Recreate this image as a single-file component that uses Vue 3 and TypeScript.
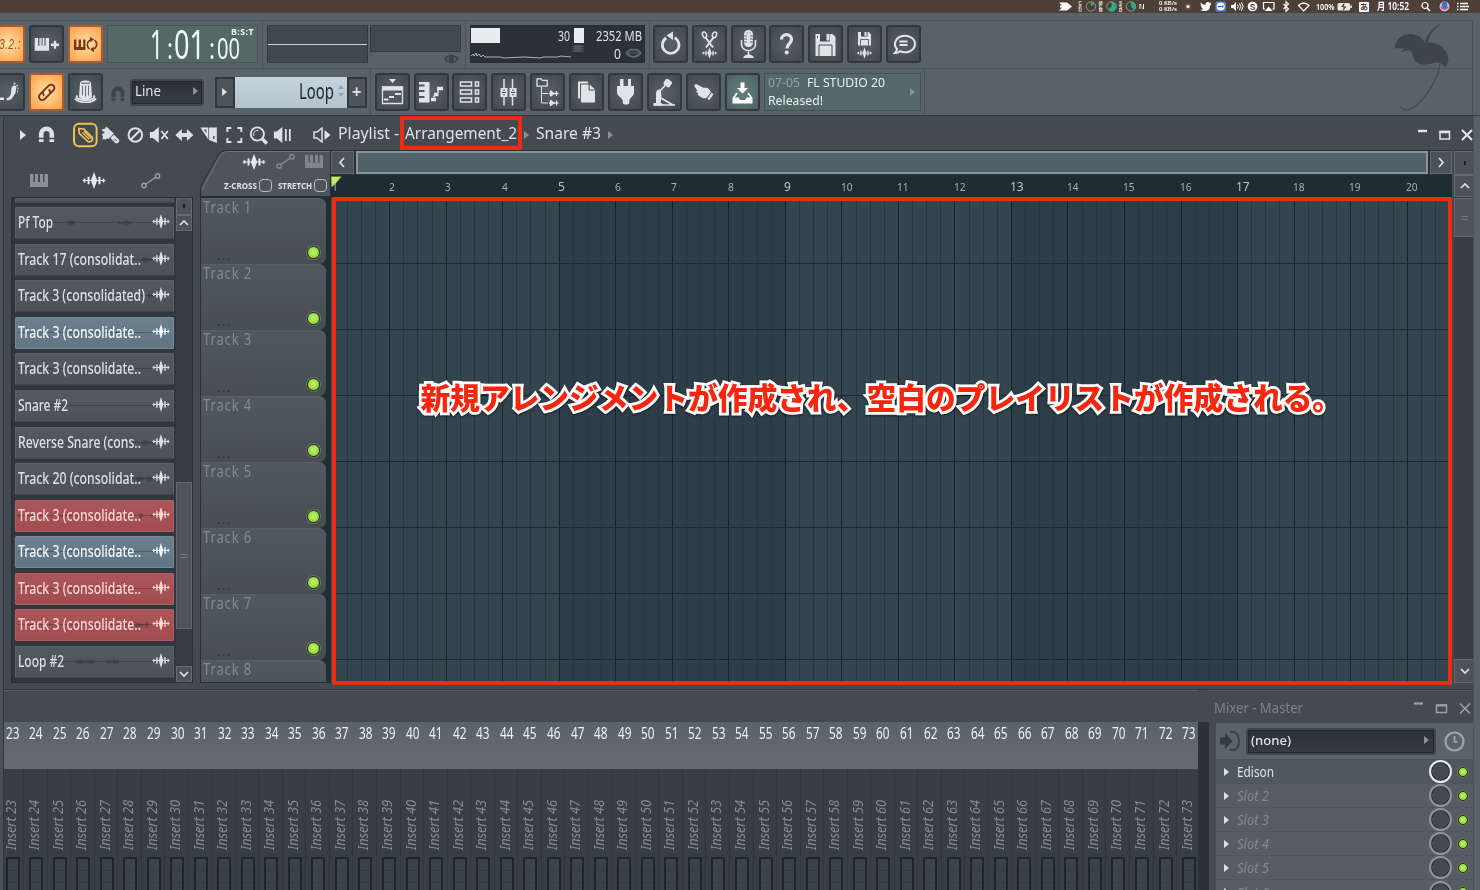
<script setup lang="ts">
import { type Directive } from 'vue'

/* Condenses a text so that it takes the given width. */
const vFit: Directive<HTMLElement, number> = {
  mounted(el, { value }) {
    const style = getComputedStyle(el)
    const natural = parseFloat(style.width)
    el.style.marginRight = `${(parseFloat(style.marginRight) || 0) + value - natural}px`
    el.style.transform = `scaleX(${value / natural})`
  },
}

interface Clip { name: string; w: number; tone?: 'red' | 'blue'; bursts?: number[] }

const wave =
  '<path d="M.5 8h18" stroke="currentColor"/><path d="M9.500 0L12 8 9.500 16 7 8Z" fill="currentColor"/><path d="M5.200 4.500v7M13.800 4.500v7" stroke="currentColor" stroke-width="1.600"/><path d="M2 6.200v3.600M17 6.200v3.600" stroke="currentColor" stroke-width="1.300"/>'

const bars = (x: number, y: number, s: number) =>
  `<g transform="translate(${x} ${y}) scale(${s})"><path d="M0 0h3.400v7.500h1.200V0h1.400v7.500h.5V0h1v7.500h.6V0h1.400v7.500h1.200V0H14v12.500H0Z" fill="currentColor"/></g>`
const miniWave = (x: number, y: number) =>
  `<g transform="translate(${x} ${y}) scale(.82 .7)">${wave}</g>`

const icons: Record<string, string> = {
  keysPlus: bars(5.7, 13, 1.02) + '<path d="M22 19.700h8M26 15.700v8" stroke="currentColor" stroke-width="2.400"/>',
  keysLoop:
    '<path d="M6 14.500v10.500h11.500v-10.500h-2.300v7.500h-2.200v-7.500h-2.400v7.500H8.300v-7.500Z" fill="currentColor"/><path d="M21.500 24a5.300 5.300 0 0 1 1.500-9.300M26.500 15a5.300 5.300 0 0 1-1.500 9.300" fill="none" stroke="currentColor" stroke-width="1.500"/><path d="M22 11.800l4 2.400-3.500 3ZM26 27.200l-4-2.600 3.500-2.800Z" fill="currentColor"/>',
  step:
    '<path d="M10 24.500h4v2.500h-4ZM16 25.500c4-1 5-4 5-6l.5-5 2.500-2.500 2.500 1.500-1 6.500-4 6-4 1.500Z" fill="currentColor"/><path d="M23.500 10.500h2M26.500 12.500h1.500M27.500 15.500h1M27 18.500h1" stroke="currentColor" stroke-width="1.500"/>',
  link:
    '<g transform="rotate(-45 17.500 19.500)" fill="none" stroke="currentColor" stroke-width="1.900"><path d="M16 16.200h-4.500a3.300 3.300 0 0 0 0 6.600h6.500a3.300 3.300 0 0 0 3.200-4"/><path d="M19 22.800h5a3.300 3.300 0 0 0 0-6.600h-7a3.300 3.300 0 0 0-3.200 4"/></g>',
  hat:
    '<path d="M12 10c0-3.500 11-3.500 11 0l1 14c-1 3-12 3-13 0Z" fill="currentColor"/><path d="M14.500 12.500v10M17.500 12.500v11M20.500 12.500v10" stroke="#596167" stroke-width=".9"/><path d="M13 10.200h9" stroke="#454d52"/><path d="M9.500 22.500c-6 6 22 6 16 0" fill="none" stroke="currentColor" stroke-width="2"/><path d="M7 25.500c3 5 18 5 21 0" fill="none" stroke="currentColor" stroke-width="1.700"/>',
  undo:
    '<path d="M21.500 12.600a8.300 8.300 0 1 1-8.300 .4" fill="none" stroke="currentColor" stroke-width="2.700"/><path d="M20 6.500v8.500l-6.500-4.500Z" fill="currentColor"/>',
  scissors:
    '<path d="M13.500 12.500l7.500 10M21.500 12.500l-7.500 10" stroke="currentColor" stroke-width="2"/><ellipse cx="12.500" cy="9.800" rx="2" ry="2.900" transform="rotate(-20 12.500 9.800)" fill="none" stroke="currentColor" stroke-width="1.500"/><ellipse cx="22.500" cy="9.800" rx="2" ry="2.900" transform="rotate(20 22.500 9.800)" fill="none" stroke="currentColor" stroke-width="1.500"/>' +
    miniWave(9.7, 22.5),
  mic:
    '<rect x="13" y="5" width="9" height="17" rx="4.500" fill="currentColor"/><path d="M13 11h3M19 11h3M13 14h3M19 14h3M13 17h3M19 17h3M15.500 8h1M18.500 8h1" stroke="#596167"/><path d="M10.500 15v4.500a7 6 0 0 0 14 0V15M17.500 25.500v5" fill="none" stroke="currentColor" stroke-width="1.600"/><path d="M12 33q1-3.500 5.500-3.500T23 33Z" fill="currentColor"/>',
  help:
    '<path d="M12.500 14.500c0-6.500 10-6.500 10 0c0 4-4.500 4.500-4.500 9" fill="none" stroke="currentColor" stroke-width="3.200"/><circle cx="17.700" cy="27.500" r="2" fill="currentColor"/>',
  save:
    '<path d="M7.500 9h17l3 3v19h-20Z" fill="currentColor"/><rect x="12" y="9" width="10" height="7.500" fill="#454d52"/><rect x="18.500" y="9" width="3" height="6.500" fill="currentColor"/><path d="M11 31V20h13v11" fill="none" stroke="#454d52" stroke-width="1"/><path d="M9.500 11v2" stroke="#454d52"/>',
  saveNew:
    '<path d="M11 7h10.500l2.500 2.500V20.500H11Z" fill="currentColor"/><rect x="14" y="7" width="6.500" height="4.500" fill="#454d52"/><rect x="17.500" y="7" width="2" height="4" fill="currentColor"/><path d="M13.500 20.500v-6h8v6" fill="none" stroke="#454d52" stroke-width=".8"/>' +
    miniWave(9.7, 22.5),
  chat:
    '<path d="M14 26.200a10 8.300 0 1 0-3-2.200c0 2-1 3-2 4c2 0 4-.8 5-1.800Z" fill="none" stroke="currentColor" stroke-width="2"/><path d="M13.500 16.500h8M13.500 20h8" stroke="currentColor" stroke-width="1.900"/>',
  playlist:
    '<path d="M14 6h7l-3.500 4Z" fill="currentColor"/><path d="M7.500 14v16.500h20V14Z" fill="none" stroke="currentColor" stroke-width="1.300"/><rect x="7" y="13.500" width="21" height="4" fill="currentColor"/><path d="M9 26.500h4.500M14 24h5M20 21h6" stroke="currentColor" stroke-width="2.200"/>',
  pianoRoll:
    '<path d="M5 9h10.500v20.500H5v-4.500h5.500v-2H5v-4h5.500v-2H5v-3.500h5.500v-2H5Z" fill="currentColor"/><path d="M17 26.500h5M20 21.500h4.500M23 15.500h6" stroke="currentColor" stroke-width="3.400"/><path d="M20 24.500v-2M24 20v-4" stroke="currentColor" stroke-width="1.500"/>',
  rack:
    '<path d="M8.500 9h11v4h-11ZM8.500 17h11v4h-11ZM8.500 25h11v4h-11ZM23.500 9h3v4h-3ZM23.500 17h3v4h-3ZM23.500 25h3v4h-3Z" fill="none" stroke="currentColor" stroke-width="1.500"/>',
  mixer:
    '<path d="M13 6v26.500M21.500 6v26.500" stroke="currentColor" stroke-width="1.500"/><path d="M9.500 15h7v9h-7ZM18.500 15h7v9h-7Z" fill="currentColor"/><path d="M11 19.500h4M20 19.500h4M13 16.500v1.500M22 16.500v1.500M13 21v1.500M22 21v1.500" stroke="#3d454a" stroke-width="1.200"/>',
  browser:
    '<path d="M7 13.200V5.800h4l1.200 1.500h5v5.900Z" fill="none" stroke="currentColor" stroke-width="1.300"/><path d="M11.500 14v16H18M11.500 20.500H18" fill="none" stroke="currentColor" stroke-width="1"/><path d="M19 20.500h9.500M19 30h9.500M20.500 17.500v6M26.500 18v5M20.500 27v6M26.500 27.500v5" stroke="currentColor" stroke-width="1.300"/><path d="M21 17.500l4 3-4 3ZM21 27l4 3-4 3Z" fill="currentColor"/>',
  files:
    '<path d="M9 8.500h10v2h-8v15H9Z" fill="currentColor"/><path d="M12 11.500h7.500v6H26v12H12Z" fill="currentColor"/><path d="M20.700 11.500l5.300 5h-5.300Z" fill="currentColor"/>',
  plug:
    '<path d="M12 6h3.500v7H20V6h3v7h3v6c0 5-4 4.500-4.800 9v2.500l-1.700 1h-3l-1.700-1V28c-.8-4.500-5.800-4-5.800-9v-6h3Z" fill="currentColor"/>',
  stomp:
    '<g fill="currentColor"><rect x="17" y="6.500" width="7.500" height="7" rx="2" transform="rotate(35 20.500 10)"/><path d="M9 21q0-5 4-4.500q2.500 4 .5 14H9Z"/><path d="M6.500 30h8l3 2.500h-11Z"/></g><path d="M18.500 12l-6 6.500M13 24.500l13 7.500M6.500 32h21.500" stroke="currentColor" stroke-width="1.700"/>',
  touch:
    '<path d="M8 12.500l2-1.500 8 4c3-1 5 .5 7 4l-4.500 6c-2.500 1-5-.5-6.500-1.500l-2.500-2 1-1-2.500-1.800 1.200-1.200Z" fill="currentColor"/><path d="M26.500 20.500l-4.200 6" stroke="currentColor" stroke-width="2.200"/>',
  download:
    '<path d="M15.500 9.500h4V15h3.500l-5.500 5.500L12 15h3.500Z" fill="currentColor"/><path d="M12 20l-3.500 5M23 20l3.500 5" fill="none" stroke="currentColor" stroke-width="1.700"/><path d="M7.500 24.500h6l1.500 2.500h5l1.500-2.500h6v6h-20Z" fill="currentColor"/>',
}

const tools: Record<string, string> = {
  pencil:
    '<g fill="none" stroke="#f0bf55"><rect x="-11.300" y="-11.300" width="22.600" height="22.600" rx="5" stroke-width="2"/><path d="M-6.500-6.500L-1.500-6 7 2.500Q8 5 5.500 6.500Q3 7.500 2 6L-6-1.500Z" stroke-width="1.700"/><path d="M-3-2.500L4 4.500M-1.500-4L6 3.500" stroke-width="1.300"/></g>',
  brush:
    '<path d="M-4-8.500L3.500-1.500-2 4Q-4 2.500-5 5Q-6 3-8 5Q-6.500 2-8.500-1Q-6.500-1-5.500-3-8-3-8.500-6Q-5.500-5-4-8.500Z" fill="currentColor"/><path d="M0 3L3.500-.5 9 5Q9 8.500 5.500 8.500Z" fill="currentColor"/><path d="M4 4l2.500 2" stroke="#434a50"/>',
  none: '<circle r="6.800" fill="none" stroke="currentColor" stroke-width="2"/><path d="M-4.500 4.500L4.500-4.500" stroke="currentColor" stroke-width="2"/>',
  mute: '<path d="M-9.500-3h3L-.5-8V8L-6.500 3h-3Z" fill="currentColor"/><path d="M2-4L8.500 4M8.500-4L2 4" stroke="currentColor" stroke-width="1.800"/>',
  slip: '<path d="M-9 0L-2.500-6v4h5v-4L9 0 2.500 6V2h-5v4Z" fill="currentColor"/>',
  slice: '<path d="M-9-7.500H-1V4.500ZM-.3-7.500H7.500V8L-.3 5Z" fill="currentColor"/><path d="M-5.500-5.500H-3V-2Z" fill="#434a50"/><path d="M4.500 1v3" stroke="#434a50" stroke-width="1.400"/>',
  select: '<path d="M-7-3v-4h4M3-7h4v4M7 3v4H3M-3 7h-4V3" fill="none" stroke="currentColor" stroke-width="1.900"/>',
  zoom: '<circle cx="-1" cy="-1" r="6.600" fill="none" stroke="currentColor" stroke-width="1.900"/><path d="M4 4L8.500 8.500" stroke="currentColor" stroke-width="3.400"/><path d="M-4.500 1A4 4 0 0 1 0-4.500" fill="none" stroke="currentColor"/>',
  play: '<path d="M-9.500-3.500h3L-1-8V8L-6.500 3.500h-3Z" fill="currentColor"/><path d="M2.500-6V6M6.500-6V6" stroke="currentColor" stroke-width="1.800"/>',
}

const row1Tools = ['undo', 'scissors', 'mic', 'help', 'save', 'saveNew', 'chat']
const row2Tools = ['playlist', 'pianoRoll', 'rack', 'mixer', 'browser', 'files', 'plug', 'stomp', 'touch']

const clips: Clip[] = [
  { name: 'Pf Top', w: 35, bursts: [52, 8, 103, 14] },
  { name: 'Track 17 (consolidat..', w: 123, bursts: [126, 12] },
  { name: 'Track 3 (consolidated)', w: 127, bursts: [132, 8] },
  { name: 'Track 3 (consolidate..', w: 123, tone: 'blue' },
  { name: 'Track 3 (consolidate..', w: 123 },
  { name: 'Snare #2', w: 50 },
  { name: 'Reverse Snare (cons..', w: 123, bursts: [126, 14] },
  { name: 'Track 20 (consolidat..', w: 123, bursts: [120, 18] },
  { name: 'Track 3 (consolidate..', w: 123, tone: 'red', bursts: [2, 6, 42, 6, 124, 4, 136, 6] },
  { name: 'Track 3 (consolidate..', w: 123, tone: 'blue' },
  { name: 'Track 3 (consolidate..', w: 123, tone: 'red' },
  { name: 'Track 3 (consolidate..', w: 123, tone: 'red', bursts: [118, 16] },
  { name: 'Loop #2', w: 46, bursts: [60, 20, 92, 11] },
]

/* Turns [start, length] pairs into a run of short ticks. */
function burstPath(b: number[] = []): string {
  let d = ''
  for (let i = 0; i < b.length; i += 2) {
    for (let x = 0; x < b[i + 1]; x += 2) {
      const h = 0.8 + ((x * 7 + i) % 5) * 0.45
      d += `M${b[i] + x} ${15 - h}v${h * 2}`
    }
  }
  return d
}

const BAR = 56.53
const barNumbers = Array.from({ length: 20 }, (_, i) => i + 1)
const beats = Array.from({ length: 80 }, (_, i) => i)
const tracks = [1, 2, 3, 4, 5, 6, 7, 8]
const inserts = Array.from({ length: 51 }, (_, i) => i + 23)
const slots = ['Edison', 'Slot 2', 'Slot 3', 'Slot 4', 'Slot 5', 'Slot 6']
</script>

<template>
  <div class="screen">
    <header class="menubar">
      <svg class="stats" width="88" height="13">
        <path d="M1 2.500h8l5 4-5 4H1l3-3H2v-2h2Z" fill="#fff" />
        <g fill="none" stroke="#8f9d92"><circle cx="33" cy="6.500" r="4.700" /><circle cx="53.500" cy="6.500" r="4.700" /><circle cx="73" cy="6.500" r="4.700" /></g>
        <g fill="#22b08d"><path d="M33 6.500V2a4.500 4.500 0 0 1 3.500 2Z" /><path d="M53.500 6.500V2a4.500 4.500 0 1 1-3.500 7.300Z" /><path d="M73 6.500V2a4.500 4.500 0 0 1 3 8Z" /></g>
        <g fill="#e8e4e2" font-family="Liberation Sans, sans-serif" font-size="4.500" font-weight="700" text-anchor="middle">
          <text x="22" y="4.500">C</text><text x="22" y="8.500">P</text><text x="22" y="12">U</text>
          <text x="42.500" y="4.500">M</text><text x="42.500" y="8.500">E</text><text x="42.500" y="12">M</text>
          <text x="62.500" y="4.500">S</text><text x="62.500" y="8.500">S</text><text x="62.500" y="12">D</text>
        </g>
        <path d="M82 9V4l1.500 1.500M85.500 4v5L84 7.500" fill="none" stroke="#fff" />
      </svg>
      <div class="net"><span v-fit="18">0 KB/s</span><span v-fit="18">0 KB/s</span></div>
      <svg class="tray" width="134" height="13">
        <circle cx="10" cy="6.500" r="3.500" fill="#5e524c" /><circle cx="10" cy="6.500" r="1.600" fill="#fff" />
        <path d="M22.500 2.500q2.500 2.500 5 2.500q0-3 2.500-3q1 0 2 1l1.500-.5-1 1.500 1-.2-1.500 1.700q0 5.500-5.500 5.500-3 0-4.500-1.200 2 .2 3.200-.9-1.500-.3-2-1.700h1q-1.500-.8-1.700-2.300l1 .3q-1.500-1.500-1-2.700Z" fill="#fff" />
        <rect x="37.500" y="1.500" width="10.500" height="10" rx="1.500" fill="#3f86dc" /><circle cx="42.700" cy="6.500" r="4" fill="#fff" /><path d="M39.500 6.500l2-1.500v1h2.500V5l2 1.500-2 1.500V7h-2.500v1Z" fill="#2a6fc9" />
        <path d="M53 5h2l3-3v9l-3-3h-2Z" fill="#fff" /><path d="M59.500 4.500q1.300 2 0 4M61.500 3.300q2.300 3.200 0 6.400M63.500 2.300q3 4.200 0 8.400" fill="none" stroke="#fff" />
        <circle cx="74.500" cy="6.500" r="4.800" fill="#fff" /><text x="74.500" y="9.500" font-size="8.500" font-weight="700" font-family="Liberation Sans, sans-serif" text-anchor="middle" fill="#4e4039">S</text>
        <path d="M87 9h-1.500V2.500h10.500V9H94.500" fill="none" stroke="#fff" stroke-width="1.200" /><path d="M90.700 6.500l4 4.500h-8Z" fill="#fff" />
        <path d="M105.500 4l5 5-2.500 2.500v-10l2.500 2.500-5 5" fill="none" stroke="#fff" stroke-width="1.100" />
        <path d="M120.500 5.500q5-5 10.500 0L125.700 11Z" fill="none" stroke="#fff" stroke-width="1.200" />
      </svg>
      <span class="pct" v-fit="18.500">100%</span>
      <svg class="batt" width="15" height="13"><rect x=".5" y="3" width="12.500" height="7.500" rx="1.500" fill="#e9e6e4" /><path d="M14 5.500v2.500" stroke="#fff" stroke-width="1.500" /><path d="M7.500 2.500L4 7h2.500L6 11l3.500-4.500H7Z" fill="#4e4039" /></svg>
      <span class="ime">あ</span>
      <span class="clock" v-fit="32">月 10:52</span>
      <svg class="end" width="48" height="13">
        <circle cx="4" cy="5.500" r="3" fill="none" stroke="#fff" stroke-width="1.200" /><path d="M6 8l3 3" stroke="#fff" stroke-width="1.400" />
        <circle cx="23.500" cy="6.500" r="5" fill="#c9b9d8" /><path d="M21 4a2.500 2.500 0 0 1 5 0v2a2.500 2.500 0 0 1-5 0Z" fill="#3f6fd0" /><path d="M20 7q3.500 4 7 0" fill="none" stroke="#d14d86" stroke-width="1.400" />
        <path d="M36 3.500h1.500M39 3.500h8M36 6.500h1.500M39 6.500h9M36 9.500h1.500M39 9.500h8" stroke="#fff" stroke-width="1.600" />
      </svg>
    </header>

    <section class="toolbar">
      <div class="bar first">
        <button class="tb hot lcd"><span class="seg" v-fit="22">3.2.:</span></button>
        <button class="tb"><svg v-html="icons.keysPlus" /></button>
        <button class="tb hot"><svg v-html="icons.keysLoop" /></button>
        <div class="time">
          <span class="t1" v-fit="13">1</span><span class="t1 col" v-fit="6">:</span><span class="t1" v-fit="31">01</span><span class="t1 col" v-fit="6">:</span><span class="t2" v-fit="23">00</span>
          <b v-fit="23">B:S:T</b>
        </div>
        <i class="sep" />
        <div class="scope"><i /></div>
        <div class="vis">
          <div class="peak" />
          <svg width="17" height="10"><path d="M1 5q6.500-7 13 0q-6.500 7-13 0Z" fill="none" stroke="#3a4147" stroke-width="1.600" /><circle cx="7.500" cy="5" r="2.700" fill="#3a4147" /></svg>
        </div>
        <i class="sep s2" />
        <div class="cpu">
          <div class="cell"><i class="w1" /><span class="num" v-fit="12">30</span></div>
          <div class="cell"><i class="w2" /><span class="num" v-fit="46">2352 MB</span></div>
          <div class="cell low"><svg width="100" height="18"><path d="M0 12l2-2 1 2 2-3 1 3 2-2 2 3 2-2 2 2 15 0 4 1 20-1 16 1 3-1 15 0 3-1 10 1" fill="none" stroke="#b9c3c9" stroke-width=".9" /></svg></div>
          <div class="cell low"><svg width="12" height="10"><rect x="2.500" y="1" width="7" height="7" fill="#4e565d" /><path d="M0 2.500h12M0 4.700h12M0 7h12" stroke="#4e565d" /></svg><span class="num" v-fit="7">0</span><svg width="17" height="12"><path d="M1.500 6q3.500-4.500 7-3q3.500-1.500 7 3q-7 8-14 0Z" fill="none" stroke="#59626a" stroke-width="2.200" /><path d="M2 6h13" stroke="#59626a" /></svg></div>
        </div>
        <i class="sep s3" />
        <button v-for="n in row1Tools" :key="n" class="tb"><svg v-html="icons[n]" /></button>
      </div>

      <div class="bar">
        <button class="tb"><svg v-html="icons.step" /></button>
        <button class="tb hot"><svg v-html="icons.link" /></button>
        <button class="tb"><svg v-html="icons.hat" /></button>
        <svg class="snap" width="14" height="16"><path d="M2.500 15V7a4.500 4.500 0 0 1 9 0v8" fill="none" stroke="#3c444a" stroke-width="4" /><path d="M0 11.500h5M9 11.500h5" stroke="#596169" /></svg>
        <div class="select line"><span v-fit="26">Line</span><i class="tri" /></div>
        <div class="pattern">
          <button><i class="tri light" /></button>
          <div class="pname"><span v-fit="35">Loop</span><svg width="6" height="14"><path d="M0 5l3-4 3 4ZM0 9l3 4 3-4Z" fill="#93a1aa" /></svg></div>
          <button class="plus">+</button>
        </div>
        <i class="sep s4" />
        <button v-for="n in row2Tools" :key="n" class="tb"><svg v-html="icons[n]" /></button>
        <button class="tb teal"><svg v-html="icons.download" /></button>
        <div class="news">
          <p><em v-fit="32">07-05</em><span v-fit="78">FL STUDIO 20</span></p>
          <p><span v-fit="55">Released!</span></p>
          <i class="tri" />
        </div>
        <i class="sep s5" />
      </div>
      <svg class="logo" viewBox="1060 65 180 270" width="60" height="90">
        <path d="M1200 71Q1172 86 1156 122L1162 132Q1170 96 1200 73Z" fill="#3d454b" />
        <path d="M1065 143C1068 115 1090 98 1115 101C1140 103 1150 118 1158 128C1190 122 1215 140 1224 165C1230 185 1222 198 1216 199C1208 197 1206 190 1202 188C1196 186 1188 186 1175 190C1155 196 1135 195 1125 180C1118 165 1118 152 1110 150C1100 150 1090 155 1084 155L1094 145C1082 142 1075 145 1065 143Z" fill="#3d454b" />
        <path d="M1201 190C1198 230 1160 290 1130 316C1110 332 1090 330 1080 320" fill="none" stroke="#454d54" stroke-width="4" />
      </svg>
    </section>

    <div class="body">
      <div class="desk">
        <section class="playlist">
          <div class="title">
            <i class="tri light big" />
            <svg class="magnet" width="17" height="17"><path d="M3.200 16V8a5.300 5.300 0 0 1 10.600 0v8" fill="none" stroke="#dce1e4" stroke-width="4.600" /><path d="M0 12.500h6M11 12.500h6" stroke="#434a50" stroke-width="1.300" /></svg>
            <div class="tools"><svg v-for="(d, n) in tools" :key="n" viewBox="-12.350 -13 24.700 26" v-html="d" /></div>
            <svg class="spk" width="18" height="16"><path d="M1 5h3l5-4v14l-5-4H1Z" fill="none" stroke="#dce1e4" stroke-width="1.500" /><path d="M11.500 3l6 5-6 5Z" fill="#dce1e4" /></svg>
            <span class="tt" v-fit="52">Playlist</span><span class="tt dash">-</span>
            <span class="arr"><span class="tt" v-fit="112">Arrangement_2</span></span>
            <i class="tri" /><span class="tt snare" v-fit="65">Snare #3</span><i class="tri" />
            <div class="winbtns"><svg width="56" height="14"><path d="M1 3h9" stroke="#e4e8ea" stroke-width="2.400" /><path d="M23 3.500h9.500V11H23Z" fill="none" stroke="#dfe4e6" stroke-width="1.500" /><path d="M22.500 4h10.500" stroke="#dfe4e6" stroke-width="2.500" /><path d="M45 2l10 10M55 2L45 12" stroke="#e4e8ea" stroke-width="2" /></svg></div>
          </div>

          <div class="content">
            <aside class="picker">
              <div class="tabs">
                <svg width="18" height="13"><path d="M0 0h3.500v8h1.500V0h3v8h2V0h3v8h1.500V0H18v13H0Z" fill="#8a9197" /></svg>
                <svg class="on" width="24" height="17" viewBox="0 0 19 16" preserveAspectRatio="none" v-html="wave" />
                <svg width="20" height="16"><circle cx="3" cy="12.500" r="2.200" fill="none" stroke="#9aa1a6" stroke-width="1.400" /><circle cx="16.500" cy="3" r="2.200" fill="none" stroke="#9aa1a6" stroke-width="1.400" /><path d="M5 11l9.500-6.500" stroke="#9aa1a6" stroke-width="1.400" /></svg>
              </div>
              <div class="listbox">
                <ul>
                  <li class="cut" />
                  <li v-for="(c, i) in clips" :key="i" :class="c.tone">
                    <svg class="trace" width="156" height="30"><path d="M2 14.500h152" stroke="#20282e" stroke-opacity=".35" /><path :d="burstPath(c.bursts)" stroke="#20282e" stroke-opacity=".6" /></svg>
                    <span v-fit="c.w">{{ c.name }}</span>
                    <svg class="wv" width="18" height="15" viewBox="0 0 19 16" preserveAspectRatio="none" v-html="wave" />
                  </li>
                </ul>
                <div class="vbar">
                  <i class="box dot" /><i class="box"><svg width="10" height="6"><path d="M1 5l4-4 4 4" /></svg></i>
                  <div class="rail"><div class="thumb">=</div></div>
                  <i class="box"><svg width="10" height="6"><path d="M1 1l4 4 4-4" /></svg></i>
                </div>
              </div>
            </aside>

            <div class="trackcol">
              <div class="thead">
                <svg class="shape" width="131" height="47"><path d="M.5 46.500V39Q1 36 3 32L18 6Q21 .5 27 .5H130.500V46.500Z" fill="#4d555b" stroke="#252d33" /><path d="M2 40L19.500 7Q22 2 27 1.500H130" fill="none" stroke="#6b7379" /></svg>
                <div class="r1"><svg class="on" width="24" height="16" viewBox="0 0 19 16" preserveAspectRatio="none" v-html="wave" /><svg width="19" height="15"><g fill="none" stroke="#868d93" stroke-width="1.300"><circle cx="3" cy="12" r="2.200" /><circle cx="16" cy="2.800" r="2.200" /><path d="M5 10.500l9-6.200" /></g></svg><svg width="18" height="13"><path d="M0 0h3.500v8h1.500V0h3v8h2V0h3v8h1.500V0H18v13H0Z" fill="#7e858b" /></svg></div>
                <div class="r2"><span v-fit="33">Z-CROSS</span><i /><span class="st" v-fit="34">STRETCH</span><i /></div>
              </div>
              <div class="tracks">
                <div v-for="t in tracks" :key="t" class="track"><span v-fit="49">Track {{ t }}</span><em>...</em><i class="led" /></div>
              </div>
            </div>

            <div class="gridcol">
              <div class="hbar"><i class="box"><svg width="7" height="11"><path d="M6 1L2 5.500 6 10" /></svg></i><div class="hthumb" /><i class="box"><svg width="7" height="11"><path d="M1 1l4 4.500L1 10" /></svg></i></div>
              <div class="ruler">
                <svg class="flag" width="12" height="20"><path d="M0 1.500H10.500L3.500 10 .5 12Z" fill="#c3ea6a" stroke="#5b7a20" stroke-width=".6" /></svg>
                <span v-for="b in barNumbers" :key="b" :class="{ major: b % 4 === 1 && b > 1 }"><b>{{ b }}</b></span>
              </div>
              <div class="grid">
                <svg width="1120" height="488">
                  <rect width="1120" height="488" fill="#34454f" />
                  <rect v-for="k in [1, 3]" :key="k" :x="1 + k * 4 * BAR" y="0" :width="4 * BAR" height="488" fill="#2e3e48" />
                  <template v-for="b in beats" :key="b"><rect :x="Math.round(0.6 + (b * BAR) / 4)" y="0" width="1" height="488" :fill="b % 4 ? '#27353f' : '#17232b'" /></template>
                  <rect v-for="t in 7" :key="t" x="0" :y="t * 66" width="1120" height="1" fill="#1b2830" />
                </svg>
                <p class="caption">新規アレンジメントが作成され、空白のプレイリストが作成される。</p>
              </div>
            </div>

            <div class="vbar big">
              <i class="box dot" /><i class="box"><svg width="10" height="6"><path d="M1 5l4-4 4 4" /></svg></i>
              <div class="rail"><div class="thumb">=</div></div>
              <i class="box"><svg width="10" height="6"><path d="M1 1l4 4 4-4" /></svg></i>
            </div>
          </div>
        </section>

        <section class="mixer">
          <div class="strips">
            <div class="gap" />
            <div class="cols">
              <div v-for="n in inserts" :key="n" class="strip">
                <div class="no"><span v-fit="13.500">{{ n }}</span></div>
                <div class="ins"><span class="rot"><span v-fit="50">Insert {{ n }}</span></span><i /></div>
              </div>
            </div>
          </div>
          <div class="gutter" />
          <div class="fx">
            <div class="fxtitle"><span v-fit="89">Mixer - Master</span><svg width="58" height="14"><path d="M1 2.500h9" stroke="#9ba1a6" stroke-width="2.200" /><path d="M23.500 4H33.500v7.500H23.500Z" fill="none" stroke="#9ba1a6" stroke-width="1.500" /><path d="M23 4.500h11" stroke="#9ba1a6" stroke-width="2" /><path d="M47 2.500l10 10M57 2.500L47 12.500" stroke="#9ba1a6" stroke-width="1.700" /></svg></div>
            <div class="fxpanel">
              <div class="route">
                <svg width="20" height="22"><path d="M0 7.500h5V3l7.500 8L5 19v-4.500H0Z" fill="#343c42" /><path d="M10 2h4q5 1.500 5 9t-5 9h-4" fill="none" stroke="#3b4349" stroke-width="2" /></svg>
                <div class="select none"><span v-fit="40">(none)</span><i class="tri" /></div>
                <svg width="21" height="21"><circle cx="10.500" cy="10.500" r="9" fill="none" stroke="#9fa6ab" stroke-width="2.200" /><path d="M10.500 5v6h3" fill="none" stroke="#9fa6ab" stroke-width="1.700" /></svg>
              </div>
              <div v-for="(s, i) in slots" :key="s" class="slot" :class="{ used: i === 0 }">
                <i class="tri light" /><span v-fit="i ? 32 : 37">{{ s }}</span><i class="knob" /><i class="led sm" />
              </div>
            </div>
          </div>
        </section>
      </div>
      <div class="edge" />
    </div>
  </div>
</template>

<style>
html, body { margin: 0; background: #596169; overflow: hidden; }
</style>

<style scoped>
* { box-sizing: border-box; }
.screen { width: 1480px; height: 890px; overflow: hidden; display: flex; flex-direction: column; font-family: "Noto Sans", "Noto Sans CJK JP", sans-serif; color: #dde2e5; }
span, b, em { display: inline-block; white-space: nowrap; transform-origin: 0 50%; font-style: normal; flex: none; }
svg { display: block; flex: none; }
button { padding: 0; margin: 0; border: 0; font: inherit; color: inherit; }
p, ul { margin: 0; padding: 0; list-style: none; }

.menubar { height: 13px; flex: none; background: #4e4039; display: flex; align-items: center; color: #fff; font-size: 9px; font-weight: 600; line-height: 13px; padding-left: 1058px; }
.net { margin-left: 13px; width: 18px; display: flex; flex-direction: column; align-items: flex-start; font-size: 6px; line-height: 5.500px; }
.tray { margin-left: 1px; }
.pct { margin-left: 4px; }
.batt { margin-left: 2.500px; }
.ime { width: 10px; height: 10px; margin-left: 7px; background: #fff; color: #4e4039; border-radius: 1px; font-size: 8px; line-height: 10px; text-align: center; font-family: "Noto Sans CJK JP", sans-serif; }
.clock { margin-left: 8px; font-size: 10px; }
.end { margin-left: 12px; }

.toolbar { position: relative; height: 103px; flex: none; padding-top: 7px; background: #596169; border-bottom: 1px solid #343c42; overflow: hidden; }
.bar { height: 48px; width: 1473px; padding-bottom: 1px; border-top: 1px solid #495158; border-right: 1px solid #495158; display: flex; align-items: center; }
.tb { width: 35px; height: 38px; margin-right: 3.900px; flex: none; border: 2px solid #31393f; border-radius: 3px; background: radial-gradient(circle at 50% 50%, #586166, #444c51 85%); color: #dfe4e7; display: flex; justify-content: center; align-items: center; overflow: hidden; }
.tb:first-child { margin-left: -10px; }
.first .s3 ~ .tb { margin-right: 3.750px; }
.tb svg { width: 35px; height: 38px; }
.tb.hot { background: radial-gradient(circle at 50% 50%, #ffe6ae, #ffb163 70%, #ff9b48); border-color: #a85f30; color: #7c3413; }
.tb.teal { background: radial-gradient(circle, #66817d, #4d615f); color: #fff; }
.tb.lcd { justify-content: flex-end; padding-right: 2px; }
.seg { font: italic 14px "Liberation Sans", sans-serif; letter-spacing: .5px; color: #9a4f1d; }
.time { position: relative; width: 151px; height: 38px; flex: none; border: 1px solid #465655; background: #566866; color: #eef8fb; display: flex; align-items: baseline; padding-left: 42px; line-height: 36px; }
.time .t1 { font-size: 40px; font-weight: 400; }
.time .col { font-size: 29px; margin: 0 1px 0 4px; }
.time .t2 { font-size: 29px; font-weight: 400; margin-left: 1px; line-height: 22px; }
.time b { position: absolute; right: 3px; top: 0; font-size: 9px; line-height: 11px; letter-spacing: .5px; }
.sep { width: 1px; height: 47px; margin: 0 4px; background: #4a5259; flex: none; }
.scope { width: 101px; height: 38px; background: #404850; border: 1px solid #333b42; display: flex; align-items: center; flex: none; }
.scope i { height: 1px; width: 100%; background: #cbd2d6; }
.vis { width: 91px; height: 38px; margin-left: 2px; flex: none; display: flex; flex-direction: column; align-items: flex-end; gap: 2px; }
.peak { width: 91px; height: 27px; background: #424a51; border: 1px solid #333b42; flex: none; }
.s2 { margin: 0 4px; }
.s3 { margin: 0 3.500px 0 4px; }
.cpu { width: 175px; height: 38px; flex: none; background: #2a3138; display: grid; grid-template: 18px 18px / 101px 72px; border: 1px solid #262d33; }
.cell { display: flex; align-items: center; justify-content: space-between; padding-right: 1.500px; }
.num { font-size: 15px; line-height: 18px; }
.w1 { width: 29px; height: 15px; background: #e8edf0; }
.w2 { width: 10px; height: 15px; background: #e8edf0; margin-left: 2px; }
.low > .num { margin-left: 26px; }
.low > svg:first-child { align-self: flex-start; }
.snap { margin: 3px 5px 0 4px; }
.tri { width: 0; height: 0; flex: none; border-left: 5px solid #8a9298; border-top: 4.500px solid transparent; border-bottom: 4.500px solid transparent; }
.tri.light { border-left-color: #dde2e5; }
.select { display: flex; align-items: center; justify-content: space-between; background: linear-gradient(#2a3036, #363d42); border: 2px solid #3e464c; border-radius: 3px; box-shadow: inset 0 0 0 1px #22282d; }
.line { width: 74px; height: 27px; padding: 0 4px 2px 3px; font-size: 14px; line-height: 20px; flex: none; }
.pattern { display: flex; margin-left: 11px; height: 31px; width: 152px; flex: none; }
.pattern button { width: 20px; border: 2px solid #31393f; background: #4c545a; display: flex; align-items: center; justify-content: center; }
.pattern .plus { font-size: 17px; font-weight: 600; line-height: 20px; }
.pname { flex: 1; background: linear-gradient(#c3d2db, #b4c3cc); color: #1f262b; display: flex; align-items: center; justify-content: flex-end; gap: 4px; padding: 0 3px 2px 0; font-size: 21px; line-height: 28px; }
.s4 { margin: 0 3.500px; }
.news { position: relative; width: 157px; height: 38px; flex: none; background: #556766; border: 1px solid #44524f; padding: 0 3px; color: #e8f0f2; font-size: 13px; line-height: 17px; }
.news p { display: flex; gap: 7px; height: 17.500px; }
.news em { color: #93a3a5; }
.news .tri { position: absolute; right: 5px; top: 14px; }
.s5 { margin: 0 3px; }
.logo { position: absolute; left: 1393px; top: 9px; }

.body { flex: 1; display: flex; min-height: 0; }
.desk { width: 1473px; display: flex; flex-direction: column; background: #434a50; flex: none; overflow: hidden; padding-left: 3px; box-shadow: inset 3px 0 #495157; }
.edge { flex: 1; background: #596169; border-left: 1px solid #4b5359; }

.playlist { height: 574px; flex: none; border-left: 1px solid #2f373d; background: linear-gradient(#434a50, #42494f); border-bottom: 1px solid #2f373d; }
.title { height: 34px; display: flex; align-items: center; padding: 3px 0 0 16px; font-size: 16px; }
.big { border-left-width: 6px; border-top-width: 5px; border-bottom-width: 5px; }
.magnet { margin: 0 18px 0 12px; }
.tools { display: flex; color: #dce1e4; width: 223px; margin-left: .4px; }
.tools svg { width: 24.700px; height: 26px; }
.spk { margin: 0 7px 0 16.500px; }
.tt { line-height: 20px; margin-top: -3px; }
.dash { margin-left: 4px; width: 6px; }
.arr { margin: -3px 2px 0 0; width: 122px; height: 34px; border: 4px solid #ee2c12; padding: 4px 0 0 1px; border-radius: 1px; }
.arr .tt { margin-top: 0; line-height: 19px; display: block; width: fit-content; }
.snare { margin: -3px 7px 0; }
.winbtns { margin-left: auto; width: 56px; overflow: hidden; }

.content { height: 533px; display: flex; }
.picker { width: 182px; margin: 0 7px; flex: none; display: flex; flex-direction: column; }
.tabs { height: 47px; display: flex; align-items: center; padding: 14px 0 0 18.500px; gap: 34.500px; }
.on { color: #e6eaec; }
.listbox { height: 486px; border: 1px solid #272e34; background: #30373e; display: flex; overflow: hidden; }
.listbox ul { width: 164px; padding: 0 2px 0 3px; overflow: hidden; flex: none; }
.listbox li { position: relative; height: 32px; margin-bottom: 4.540px; background: linear-gradient(#525a5f, #4a5258); border: 1px solid #596167; border-bottom-color: #3f474c; border-radius: 1px; display: flex; align-items: center; justify-content: space-between; padding: 0 3px 2px 2px; font-size: 15.500px; line-height: 20px; font-weight: 500; color: #dce1e3; }
.listbox li.cut { height: 4.800px; padding: 0; border-top: 0; }
.listbox li.red { background: linear-gradient(#ab5658, #a14d50); border-color: #b35d60; color: #ffd5d3; }
.listbox li.blue { background: linear-gradient(#6b7f8d, #607483); border-color: #748896; color: #f0f8fc; }
.trace { position: absolute; left: 0; top: 0; }
.listbox li span, .wv { position: relative; }
.listbox li .wv { margin-top: -1px; }
.vbar { flex: 1; display: flex; flex-direction: column; align-items: stretch; background: #2c3339; }
.box { height: 17px; flex: none; background: #4b5359; border: 1px solid #626a70; display: flex; align-items: center; justify-content: center; }
.listbox .box { height: 16.500px; }
.box svg path { fill: none; stroke: #dde2e5; stroke-width: 1.700; }
.dot::after { content: ""; width: 2px; height: 4px; background: #181e23; }
.rail { flex: 1; background: #353c42; }
.thumb { height: 147px; margin-top: 251px; background: #4d555b; border: 1px solid #60686e; color: #727a80; font-size: 14px; display: flex; align-items: center; justify-content: center; }

.trackcol { width: 131px; flex: none; display: flex; flex-direction: column; }
.thead { position: relative; height: 47px; flex: none; padding-left: 42px; }
.shape { position: absolute; left: 0; top: 0; }
.r1 { position: relative; display: flex; align-items: center; gap: 10px; height: 23px; }
.r2 { position: relative; display: flex; align-items: center; margin-left: -18px; height: 25px; font-size: 9px; font-weight: 700; line-height: 12px; }
.r2 i { width: 13px; height: 13px; margin-left: 2px; border: 1.500px solid #b5bbbf; border-radius: 4px; }
.r2 .st { margin-left: 6px; }
.tracks { height: 486px; overflow: hidden; background: #242c33; border: solid #272e34; border-width: 1px 0 1px 1px; }
.track { position: relative; width: 125px; height: 66px; border-radius: 0 7px 7px 0; background: linear-gradient(#515960, #464e54); border-top: 1px solid #575f65; color: #838a8f; font-size: 15.500px; line-height: 17px; letter-spacing: 1px; padding-left: 2px; }
.track em { position: absolute; left: 16px; top: 47px; line-height: 17px; color: #2f373d; font-size: 14px; }
.track .led { position: absolute; left: 106px; top: 47px; }
.led { width: 13px; height: 13px; border-radius: 50%; background: radial-gradient(circle at 50% 45%, #c3f573, #8bd331 80%); border: 1.500px solid #26331d; box-shadow: 0 0 0 1px #69725f; flex: none; }
.led.sm { width: 10px; height: 10px; }

.gridcol { width: 1121px; flex: none; display: flex; flex-direction: column; }
.hbar { height: 25px; flex: none; display: flex; background: #293138; padding: 1px 0; }
.hbar .box { width: 22px; height: 23px; }
.hbar .box:first-child { width: 23px; padding-right: 3px; }
.hthumb { flex: 1; margin: 0 2px; background: #50616a; border: 2px solid #899599; }
.ruler { position: relative; height: 22px; flex: none; background: #1f2c34; display: flex; padding-left: 1px; overflow: hidden; }
.ruler span { width: 56.530px; font-size: 11px; line-height: 24px; color: #a7b0b5; }
.ruler span b { font-weight: 400; transform: scaleX(.92); }
.ruler .major { font-size: 13px; color: #bcc4c8; line-height: 23px; }
.flag { position: absolute; left: 0; top: 0; }
.grid { position: relative; width: 1120px; height: 488px; flex: none; margin-left: 1px; }
.grid::after { content: ""; position: absolute; inset: 0; border: 4px solid #ee2c12; border-radius: 2px; }
.caption { position: absolute; left: 88.500px; top: 178px; font-family: "Noto Sans CJK JP", sans-serif; font-weight: 900; font-size: 29.720px; line-height: 44px; white-space: nowrap; color: #f6260e; -webkit-text-stroke: 5.500px #fff; paint-order: stroke fill; stroke-linejoin: round; filter: drop-shadow(0 1px 1px #0008); }
.vbar.big { padding-top: 1px; margin-left: 2px; }
.vbar.big .box { height: 24px; width: 21px; }
.big .box:nth-child(2) { height: 22px; }
.big .thumb { height: 39px; margin-top: 1px; width: 21px; }

.mixer { flex: 1; display: flex; min-height: 0; border-left: 1px solid #2f373d; }
.strips { width: 1194px; flex: none; overflow: hidden; }
.gap { height: 32px; border-top: 1px solid #596167; }
.cols { display: flex; width: 1201px; margin-left: -3.500px; }
.strip { width: 23.540px; flex: none; }
.no { height: 47px; background: linear-gradient(#5a6369, #656c71); padding: 1px 0 0 5.300px; font-size: 16px; line-height: 21px; color: #eef1f2; }
.ins { position: relative; height: 121px; background: #373e45; border-right: 1px solid #2f363c; }
.rot { position: absolute; left: 2px; top: 81px; transform: rotate(-90deg); transform-origin: 0 0; height: 16px; line-height: 16px; font-size: 14px; color: #848c92; }
.rot span { font-style: italic; }
.ins i { position: absolute; left: 5px; top: 88px; width: 14px; height: 40px; border: 2px solid #1e252b; background: repeating-linear-gradient(#3b434a 0 11px, #343b42 11px 12px); }
.gutter { width: 11px; margin-top: 32px; background: #2a3137; flex: none; }
.fx { flex: 1; padding-left: 6px; border-top: 1px solid #596167; }
.fxtitle { height: 32px; display: flex; align-items: center; justify-content: space-between; padding: 2px 3px 0 0; color: #7c8388; font-size: 13.500px; line-height: 18px; }
.fxtitle > span { margin-left: -1px; }
.fxpanel { margin-left: 1px; background: #565e64; }
.route { height: 37px; display: flex; align-items: center; background: #5b636a; border-bottom: 1px solid #4b5359; padding: 0 9px 0 4px; gap: 6px; justify-content: space-between; }
.none { width: 190px; height: 27px; padding: 0 5px 2px 3px; font-size: 13px; line-height: 18px; font-weight: 500; margin-right: 2px; }
.slot { height: 24.100px; border-bottom: 1px solid #4f575d; display: flex; align-items: center; padding: 0 6px 0 8px; font-size: 15px; line-height: 20px; color: #81898e; }
.slot.used { background: #4f585e; color: #dde2e5; }
.slot span { margin-left: 8px; margin-top: -1px; font-style: italic; }
.slot.used span { font-style: normal; }
.knob { width: 23px; height: 23px; flex: none; margin: 0 6px 0 auto; border-radius: 50%; border: 2.500px solid #8d9499; background: radial-gradient(circle, #434b51 0 60%, #1f262b 64%, #555d63 72%); }
.used .knob { border-color: #e6eaec; }
</style>
